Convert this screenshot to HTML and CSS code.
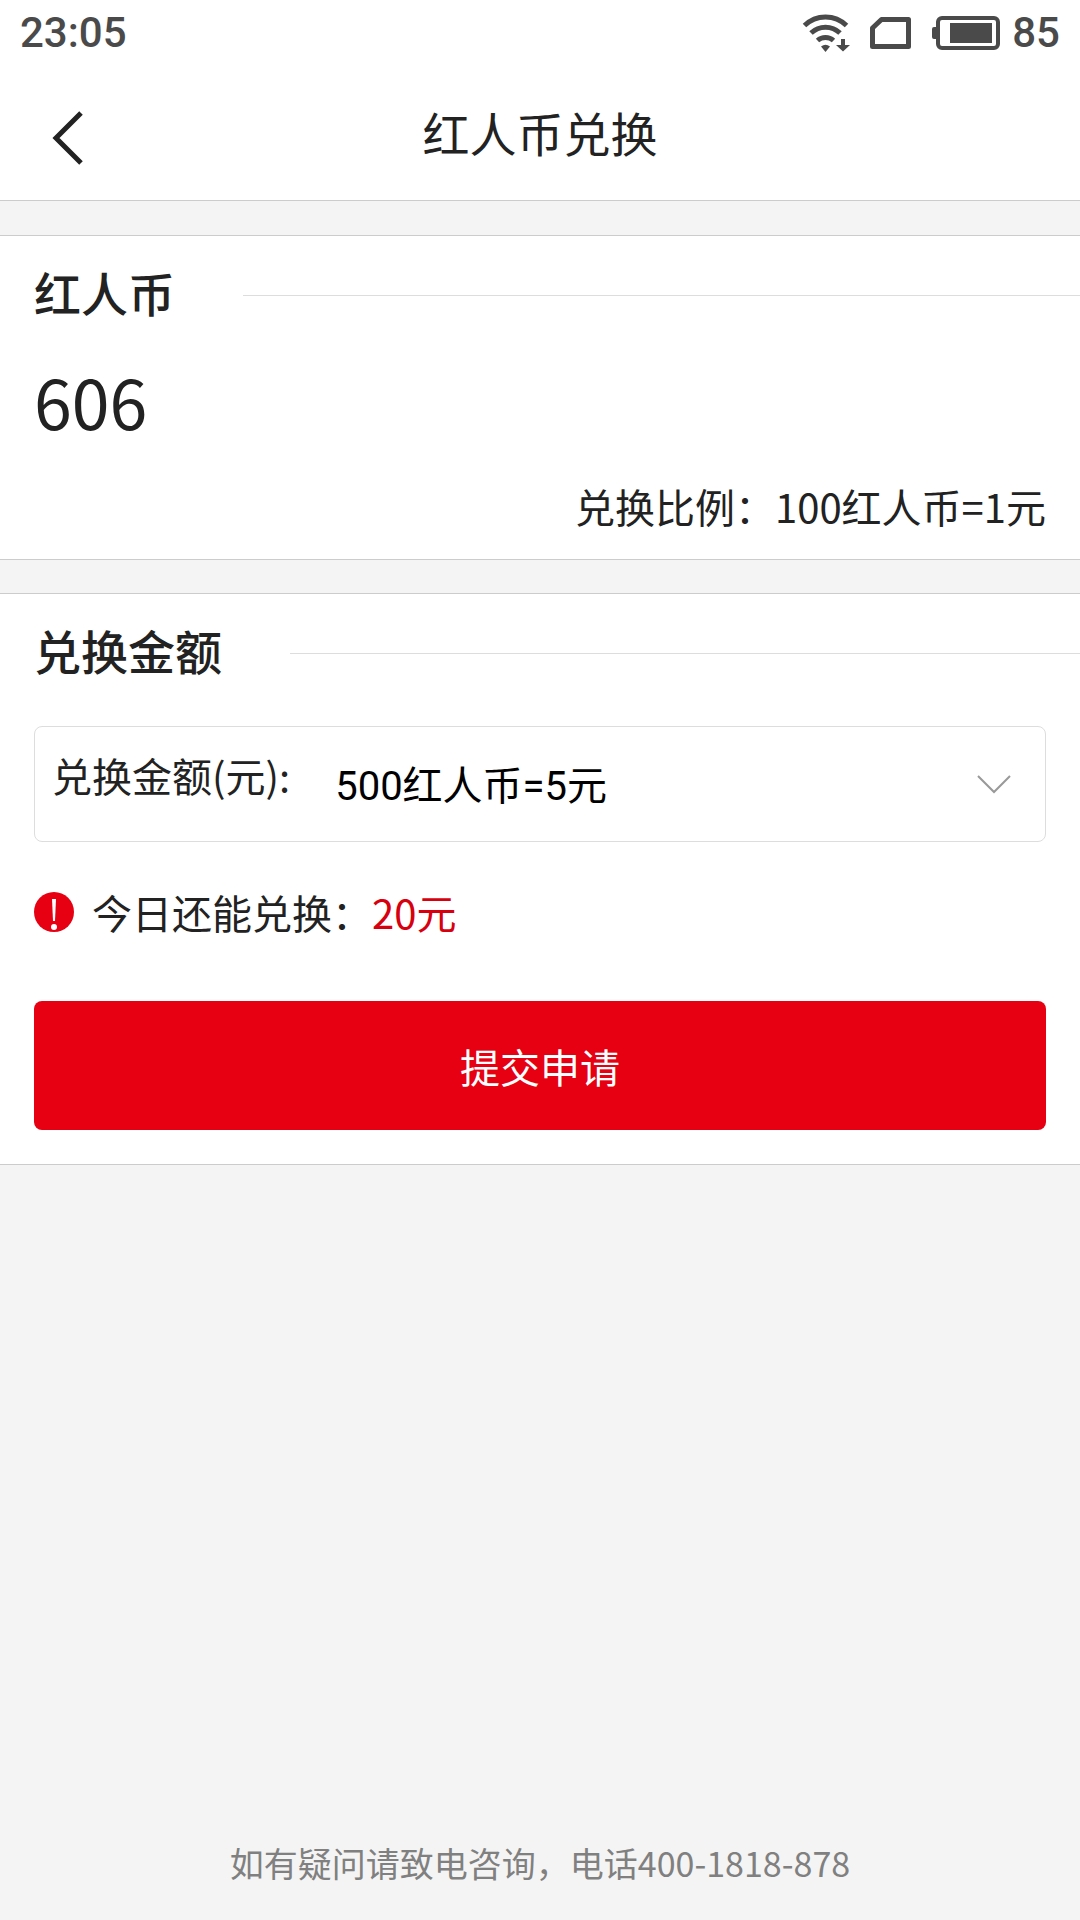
FILE: index.html
```html
<!DOCTYPE html>
<html lang="zh-CN">
<head>
<meta charset="utf-8">
<meta name="viewport" content="width=device-width, initial-scale=1">
<title>红人币兑换</title>
<link rel="stylesheet" href="styles.css">
</head>
<body>
<div class="page">
  <header class="top">
    <div class="status">
      <span>23:05</span>
      <div class="status-icons">
        <svg class="wifi" width="48" height="40" viewBox="0 0 48 40" aria-hidden="true">
          <g fill="none" stroke="#4a4a4a" stroke-width="5">
            <path d="M2.500 12.500A30 30 0 0 1 44.500 12.500"/>
            <path d="M9 20A21 21 0 0 1 38 20"/>
            <path d="M15.500 27.500A12 12 0 0 1 31.500 27.500"/>
          </g>
          <path d="M19 33.500Q23.500 30 28 33.500L23.500 39Z" fill="#4a4a4a"/>
          <path d="M39 26h4v6h5l-7 6.500-7-6.500h5z" fill="#4a4a4a"/>
        </svg>
        <svg class="sim" width="42" height="34" viewBox="0 0 42 34" aria-hidden="true">
          <path d="M2.500 12L11.500 3.500H38.500V30.500H2.500Z" fill="none" stroke="#4a4a4a" stroke-width="5" stroke-linejoin="round"/>
        </svg>
        <svg class="battery" width="68" height="34" viewBox="0 0 68 34" aria-hidden="true">
          <rect x="6" y="2" width="60" height="30" rx="4" fill="none" stroke="#4a4a4a" stroke-width="4"/>
          <path d="M0 13q0-2 2-2h3v12h-3q-2 0-2-2zM18 7h42v20h-42z" fill="#4a4a4a"/>
        </svg>
        <span>85</span>
      </div>
    </div>
    <nav class="nav">
      <button class="back" type="button" aria-label="返回">
        <svg width="32" height="54" viewBox="0 0 32 54" aria-hidden="true">
          <path d="M29 2L4 27L29 52" fill="none" stroke="#222" stroke-width="5"/>
        </svg>
      </button>
      <h1 class="title">红人币兑换</h1>
    </nav>
  </header>

  <main class="content">
    <section class="panel">
      <h2 class="heading">红人币</h2>
      <p class="balance">606</p>
      <p class="ratio">兑换比例：100红人币=1元</p>
    </section>

    <form class="panel">
      <h2 class="heading">兑换金额</h2>
      <div class="field">
        <label class="field-label" for="amount">兑换金额(元):</label>
        <select class="field-select" id="amount">
          <option>500红人币=5元</option>
        </select>
        <svg class="chevron" width="34" height="20" viewBox="0 0 34 20" aria-hidden="true">
          <path d="M1 2L17 18L33 2" fill="none" stroke="#999" stroke-width="2"/>
        </svg>
      </div>
      <p class="tip">
        <svg width="40" height="40" viewBox="0 0 40 40" aria-hidden="true">
          <circle cx="20" cy="20" r="20" fill="#e60012"/>
          <path d="M18 7h4l-1 22h-2z" fill="#fff"/>
          <circle cx="20" cy="35" r="3" fill="#fff"/>
        </svg>
        <span>今日还能兑换：<em class="quota">20元</em></span>
      </p>
      <button class="submit" type="button">提交申请</button>
    </form>
  </main>

  <footer class="footer">如有疑问请致电咨询，电话400-1818-878</footer>
</div>
</body>
</html>
```
FILE: styles.css
```css
* {
  box-sizing: border-box;
}

body,
h1,
h2,
p {
  margin: 0;
}

body {
  background: #f4f4f4;
  color: #222;
  font-family: "Noto Sans CJK SC", sans-serif;
  font-size: 40px;
  line-height: 60px;
}

.page {
  display: flex;
  flex-direction: column;
  min-height: 100vh;
}

.top {
  background: #fff;
  border-bottom: 1px solid #ccc;
}

.status {
  display: flex;
  align-items: center;
  justify-content: space-between;
  height: 66px;
  padding: 0 20px;
  color: #4a4a4a;
  font-family: Roboto, sans-serif;
  font-size: 42px;
  font-weight: 500;
}

.status-icons {
  display: flex;
  align-items: center;
}

.sim {
  margin-left: 20px;
}

.battery {
  margin: 0 12px 0 20px;
}

.nav {
  display: grid;
  grid-template-columns: 120px 1fr 120px;
  align-items: center;
  height: 134px;
}

.back {
  display: flex;
  padding: 10px 0 0 52px;
  border: 0;
  background: none;
}

.title {
  padding-bottom: 2px;
  font-size: 47px;
  font-weight: 400;
  text-align: center;
}

.content {
  display: grid;
  gap: 33px;
  padding-top: 34px;
}

.panel {
  padding: 0 34px;
  border: solid #ccc;
  border-width: 1px 0;
  background: #fff;
}

.heading {
  display: flex;
  align-items: center;
  gap: 68px;
  height: 118px;
  margin-right: -34px;
  padding-bottom: 6px;
  font-size: 47px;
  font-weight: 500;
}

.heading::after {
  content: "";
  flex: 1;
  height: 1px;
  margin-top: 6px;
  background: #ddd;
}

.balance {
  padding-bottom: 6px;
  font-size: 68px;
  line-height: 94px;
}

.ratio {
  padding-bottom: 1px;
  line-height: 104px;
  text-align: right;
}

.field {
  display: flex;
  align-items: center;
  height: 116px;
  margin-top: 14px;
  padding: 0 34px 0 17px;
  border: 1px solid #ddd;
  border-radius: 8px;
}

.field-label {
  padding-bottom: 19px;
}

.field-select {
  flex: 1;
  height: 100px;
  padding: 5px 0 0 45px;
  border: 0;
  appearance: none;
  background: none;
  color: #000;
  font-family: Roboto, "Noto Sans CJK SC", sans-serif;
  font-size: 40px;
}

.tip {
  display: flex;
  align-items: center;
  gap: 18px;
  padding: 40px 0 59px;
}

.quota {
  color: #d7000f;
  font-style: normal;
}

.submit {
  display: block;
  width: 100%;
  height: 129px;
  margin-bottom: 34px;
  border: 0;
  border-radius: 8px;
  background: #e60012;
  color: #fff;
  font: inherit;
}

.footer {
  margin-top: auto;
  padding: 31px 34px 33px;
  color: #808080;
  font-size: 34px;
  line-height: 48px;
  text-align: center;
}
```
